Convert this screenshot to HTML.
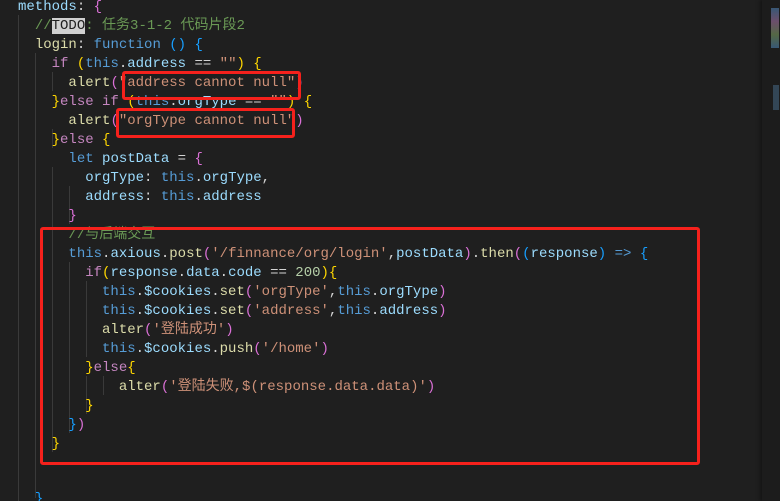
<!DOCTYPE html>
<html><head><meta charset="utf-8"><style>
html,body{margin:0;width:780px;height:501px;overflow:hidden}
body{background:#1f1f1f;position:relative;font-family:"Liberation Mono","Noto Sans CJK SC",monospace;font-size:14px;}
.l{position:absolute;left:18px;height:19px;line-height:19px;white-space:pre;color:#d4d4d4}
.k{color:#c586c0}.t{color:#569cd6}.v{color:#9cdcfe}.s{color:#ce9178}.c{color:#6a9955}.f{color:#dcdcaa}.y{color:#ffd700}.p{color:#da70d6}.b{color:#179fff}.n{color:#b5cea8}
.g{position:absolute;width:1px;background:#3a3a3a}
.r{position:absolute;border:3px solid #f5211c;border-radius:3px}
.todo{background:#d0d0d0;color:#1f1f1f}
#w{position:absolute;left:0;top:2px;width:780px;height:501px}
</style></head><body>
<div class="g" style="left:18px;top:15px;height:486px"></div>
<div class="g" style="left:35px;top:53px;height:445px"></div>
<div class="g" style="left:52px;top:72px;height:19px"></div>
<div class="g" style="left:52px;top:129px;height:19px"></div>
<div class="g" style="left:52px;top:167px;height:285px"></div>
<div class="g" style="left:69px;top:186px;height:38px"></div>
<div class="g" style="left:69px;top:262px;height:171px"></div>
<div class="g" style="left:86px;top:281px;height:76px"></div>
<div class="g" style="left:86px;top:376px;height:38px"></div>
<div class="g" style="left:103px;top:376px;height:19px"></div>
<div style="position:absolute;left:762px;top:0;width:18px;height:501px;background:#1c1c1c;box-shadow:-2px 0 3px #151515"></div>
<div style="position:absolute;left:771px;top:8px;width:8px;height:40px;background:linear-gradient(#4a7fb0,#a070a0,#7a9a60,#4a7fb0);opacity:.6"></div>
<div style="position:absolute;left:773px;top:85px;width:6px;height:25px;background:#4a6f90;opacity:.5"></div>
<div id="w">
<div class="l" style="top:-4px"><span class="v">methods</span>: <span class="p">{</span></div>
<div class="l" style="top:15px">  <span class="c">//<span class="todo">TODO</span>: 任务3-1-2 代码片段2</span></div>
<div class="l" style="top:34px">  <span class="f">login</span>: <span class="t">function</span> <span class="b">()</span> <span class="b">{</span></div>
<div class="l" style="top:53px">    <span class="k">if</span> <span class="y">(</span><span class="t">this</span>.<span class="v">address</span> == <span class="s">""</span><span class="y">)</span> <span class="y">{</span></div>
<div class="l" style="top:72px">      <span class="f">alert</span><span class="p">(</span><span class="s">"address cannot null"</span><span class="p">)</span></div>
<div class="l" style="top:91px">    <span class="y">}</span><span class="k">else if</span> <span class="y">(</span><span class="t">this</span>.<span class="v">orgType</span> == <span class="s">""</span><span class="y">)</span> <span class="y">{</span></div>
<div class="l" style="top:110px">      <span class="f">alert</span><span class="p">(</span><span class="s">"orgType cannot null"</span><span class="p">)</span></div>
<div class="l" style="top:129px">    <span class="y">}</span><span class="k">else</span> <span class="y">{</span></div>
<div class="l" style="top:148px">      <span class="t">let</span> <span class="v">postData</span> = <span class="p">{</span></div>
<div class="l" style="top:167px">        <span class="v">orgType</span>: <span class="t">this</span>.<span class="v">orgType</span>,</div>
<div class="l" style="top:186px">        <span class="v">address</span>: <span class="t">this</span>.<span class="v">address</span></div>
<div class="l" style="top:205px">      <span class="p">}</span></div>
<div class="l" style="top:224px">      <span class="c">//与后端交互</span></div>
<div class="l" style="top:243px">      <span class="t">this</span>.<span class="v">axious</span>.<span class="f">post</span><span class="p">(</span><span class="s">'/finnance/org/login'</span>,<span class="v">postData</span><span class="p">)</span>.<span class="f">then</span><span class="p">(</span><span class="b">(</span><span class="v">response</span><span class="b">)</span> <span class="t">=&gt;</span> <span class="b">{</span></div>
<div class="l" style="top:262px">        <span class="k">if</span><span class="y">(</span><span class="v">response</span>.<span class="v">data</span>.<span class="v">code</span> == <span class="n">200</span><span class="y">){</span></div>
<div class="l" style="top:281px">          <span class="t">this</span>.<span class="v">$cookies</span>.<span class="f">set</span><span class="p">(</span><span class="s">'orgType'</span>,<span class="t">this</span>.<span class="v">orgType</span><span class="p">)</span></div>
<div class="l" style="top:300px">          <span class="t">this</span>.<span class="v">$cookies</span>.<span class="f">set</span><span class="p">(</span><span class="s">'address'</span>,<span class="t">this</span>.<span class="v">address</span><span class="p">)</span></div>
<div class="l" style="top:319px">          <span class="f">alter</span><span class="p">(</span><span class="s">'登陆成功'</span><span class="p">)</span></div>
<div class="l" style="top:338px">          <span class="t">this</span>.<span class="v">$cookies</span>.<span class="f">push</span><span class="p">(</span><span class="s">'/home'</span><span class="p">)</span></div>
<div class="l" style="top:357px">        <span class="y">}</span><span class="k">else</span><span class="y">{</span></div>
<div class="l" style="top:376px">            <span class="f">alter</span><span class="p">(</span><span class="s">'登陆失败,$(response.data.data)'</span><span class="p">)</span></div>
<div class="l" style="top:395px">        <span class="y">}</span></div>
<div class="l" style="top:414px">      <span class="b">}</span><span class="p">)</span></div>
<div class="l" style="top:433px">    <span class="y">}</span></div>
<div class="l" style="top:488px">  <span class="b">}</span></div>
</div>
<div class="r" style="left:122px;top:71px;width:173px;height:23px"></div>
<div class="r" style="left:116px;top:108px;width:173px;height:24px"></div>
<div class="r" style="left:40px;top:227px;width:654px;height:232px"></div>
</body></html>
